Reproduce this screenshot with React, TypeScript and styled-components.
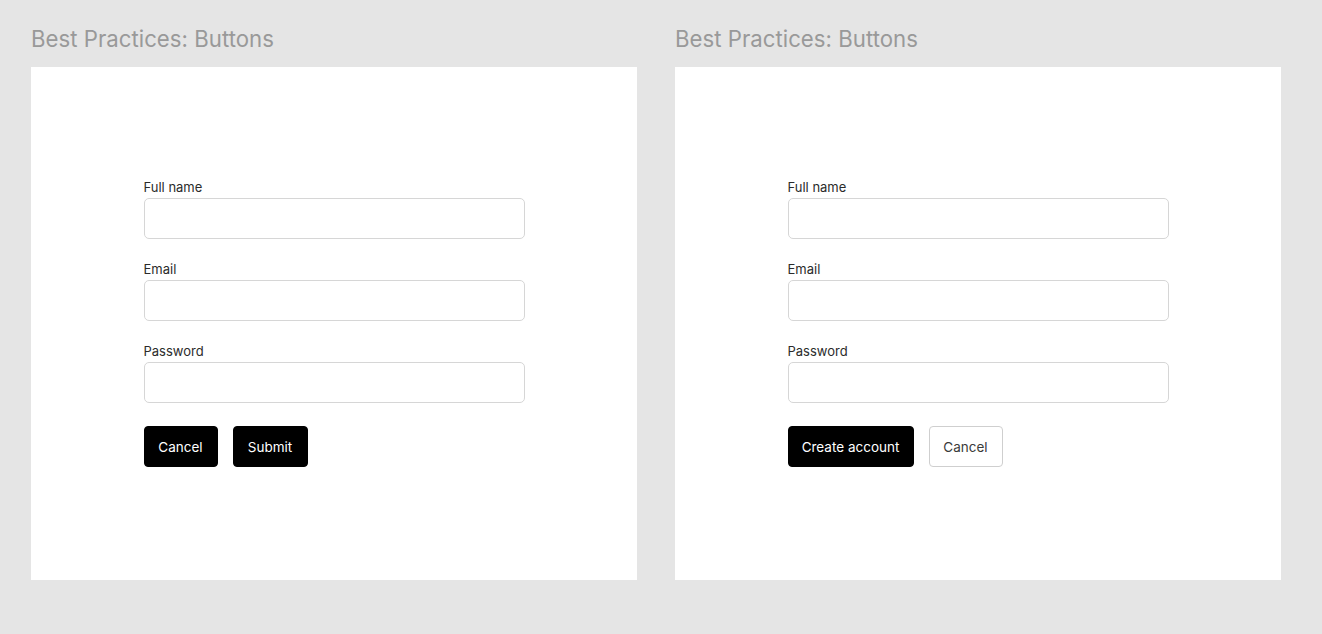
import React from "react";
import styled, { createGlobalStyle } from "styled-components";

const Global = createGlobalStyle`
  html, body { margin: 0; padding: 0; background: #e5e5e5; }
  body { font-family: Inter, "Noto Sans", sans-serif; }
  * { box-sizing: border-box; }
`;

const Page = styled.div`
  display: flex;
  gap: 38px;
  padding: 26px 0 0 31px;
`;

const Column = styled.section`
  display: flex;
  flex-direction: column;
  width: 606px;
`;

const Title = styled.h2`
  margin: -1px 0 15px 0;
  font-size: 22.2px;
  line-height: 27px;
  font-weight: 400;
  color: #999999;
  letter-spacing: 0.02px;
`;

const Panel = styled.div`
  background: #ffffff;
  height: 513px;
  padding: 112px 0 0 112.5px;
`;

const Form = styled.form`
  width: 381px;
  display: flex;
  flex-direction: column;
`;

const Field = styled.div`
  display: flex;
  flex-direction: column;
  gap: 3px;
  margin-bottom: 22px;
`;

const Label = styled.label`
  font-size: 13px;
  line-height: 16px;
  color: #2b2b2b;
`;

const Input = styled.input`
  height: 41px;
  width: 100%;
  border: 1px solid #d6d6d6;
  border-radius: 5px;
  background: #fff;
  font: inherit;
  padding: 0 12px;
  outline: none;
`;

const Actions = styled.div`
  display: flex;
  gap: 15px;
  margin-top: 1px;
`;

const Button = styled.button<{ $variant: "primary" | "outline"; $w: number }>`
  height: 41px;
  width: ${(p) => p.$w}px;
  border-radius: 4px;
  font-family: Inter, "Noto Sans", sans-serif;
  font-size: 13.5px;
  cursor: pointer;
  padding: 0;
  background: ${(p) => (p.$variant === "primary" ? "#000" : "#fff")};
  color: ${(p) => (p.$variant === "primary" ? "#fff" : "#3a3a3a")};
  border: 1px solid ${(p) => (p.$variant === "primary" ? "#000" : "#cfcfcf")};
`;

type Btn = { label: string; variant: "primary" | "outline"; w: number };

const Example = ({ buttons }: { buttons: Btn[] }) => (
  <Column>
    <Title>Best Practices: Buttons</Title>
    <Panel>
      <Form onSubmit={(e) => e.preventDefault()}>
        {["Full name", "Email", "Password"].map((f) => (
          <Field key={f}>
            <Label>{f}</Label>
            <Input type={f === "Password" ? "password" : "text"} />
          </Field>
        ))}
        <Actions>
          {buttons.map((b) => (
            <Button key={b.label} type="button" $variant={b.variant} $w={b.w}>
              {b.label}
            </Button>
          ))}
        </Actions>
      </Form>
    </Panel>
  </Column>
);

export default function App() {
  return (
    <>
      <Global />
      <Page>
        <Example
          buttons={[
            { label: "Cancel", variant: "primary", w: 74 },
            { label: "Submit", variant: "primary", w: 75 },
          ]}
        />
        <Example
          buttons={[
            { label: "Create account", variant: "primary", w: 126 },
            { label: "Cancel", variant: "outline", w: 74 },
          ]}
        />
      </Page>
    </>
  );
}
